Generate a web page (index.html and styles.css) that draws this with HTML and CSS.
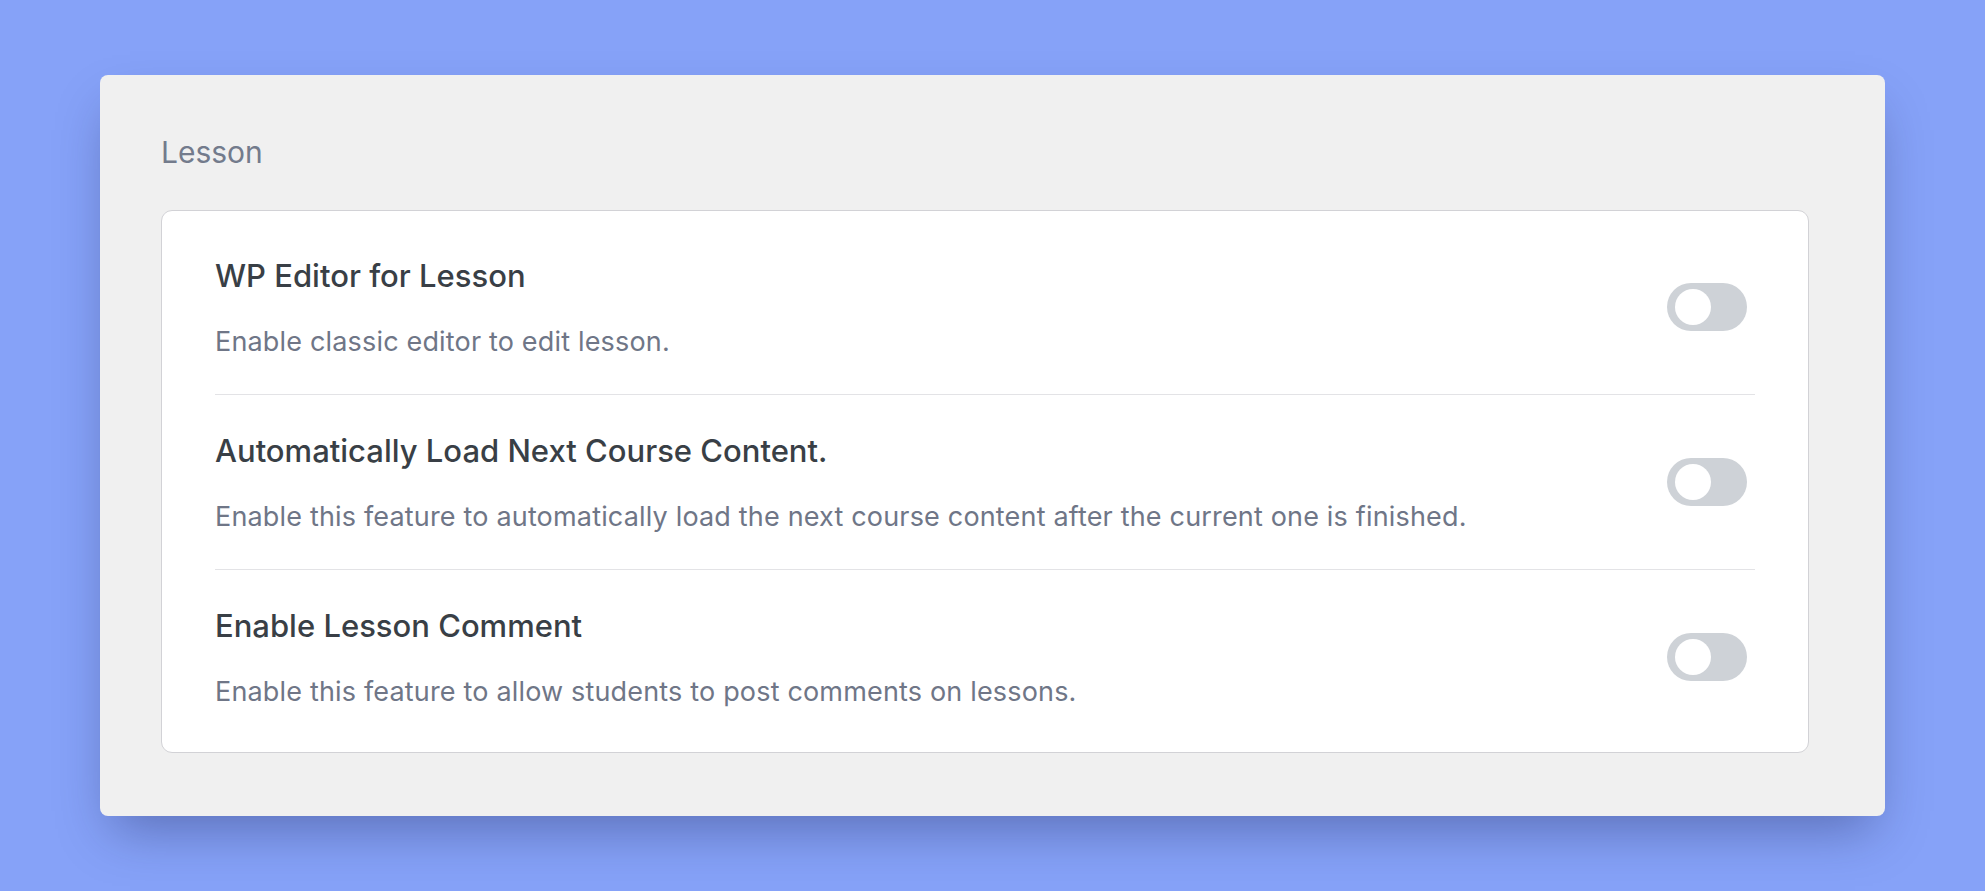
FILE: index.html
```html
<!DOCTYPE html>
<html lang="en">
<head>
<meta charset="utf-8">
<title>Lesson Settings</title>
<link rel="stylesheet" href="styles.css">
</head>
<body>
<main class="panel">
  <h2 class="section-title">Lesson</h2>
  <div class="card">
    <div class="row">
      <div class="text">
        <div class="label">WP Editor for Lesson</div>
        <div class="desc">Enable classic editor to edit lesson.</div>
      </div>
      <span class="toggle"><span class="knob"></span></span>
    </div>
    <div class="row">
      <div class="text">
        <div class="label">Automatically Load Next Course Content.</div>
        <div class="desc">Enable this feature to automatically load the next course content after the current one is finished.</div>
      </div>
      <span class="toggle"><span class="knob"></span></span>
    </div>
    <div class="row">
      <div class="text">
        <div class="label">Enable Lesson Comment</div>
        <div class="desc">Enable this feature to allow students to post comments on lessons.</div>
      </div>
      <span class="toggle"><span class="knob"></span></span>
    </div>
  </div>
</main>
</body>
</html>
```

FILE: styles.css
```css
* { box-sizing: border-box; }
html, body { margin: 0; }
body {
  background: #86a2f8;
  padding: 75px 100px;
  font-family: Inter, "Noto Sans", "Liberation Sans", sans-serif;
  min-height: 891px;
}
.panel {
  background: #f0f0f0;
  border-radius: 8px;
  padding: 55px 76px 63px 61px;
  box-shadow: 0 25px 50px -12px rgba(20, 30, 80, 0.38);
}
.section-title {
  margin: 0 0 35px;
  font-size: 30px;
  line-height: 45px;
  font-weight: 400;
  color: #737b8c;
}
.card {
  background: #fff;
  border: 1px solid #d2d2d6;
  border-radius: 11px;
  padding: 9px 53px 8px;
}
.row {
  display: flex;
  align-items: center;
  justify-content: space-between;
  padding: 33px 0;
}
.row + .row { border-top: 1px solid #e3e3e6; }
.label {
  font-size: 31px;
  line-height: 45px;
  font-weight: 500;
  color: #393f46;
}
.desc {
  margin-top: 24px;
  font-size: 27px;
  line-height: 39px;
  letter-spacing: 0.17px;
  color: #6f7687;
}
.toggle {
  flex: none;
  width: 80px;
  height: 48px;
  margin-right: 8px;
  border-radius: 24px;
  background: #ced2d7;
  display: flex;
  align-items: center;
  padding-left: 8px;
}
.knob {
  width: 36px;
  height: 36px;
  border-radius: 50%;
  background: #fff;
}
```
